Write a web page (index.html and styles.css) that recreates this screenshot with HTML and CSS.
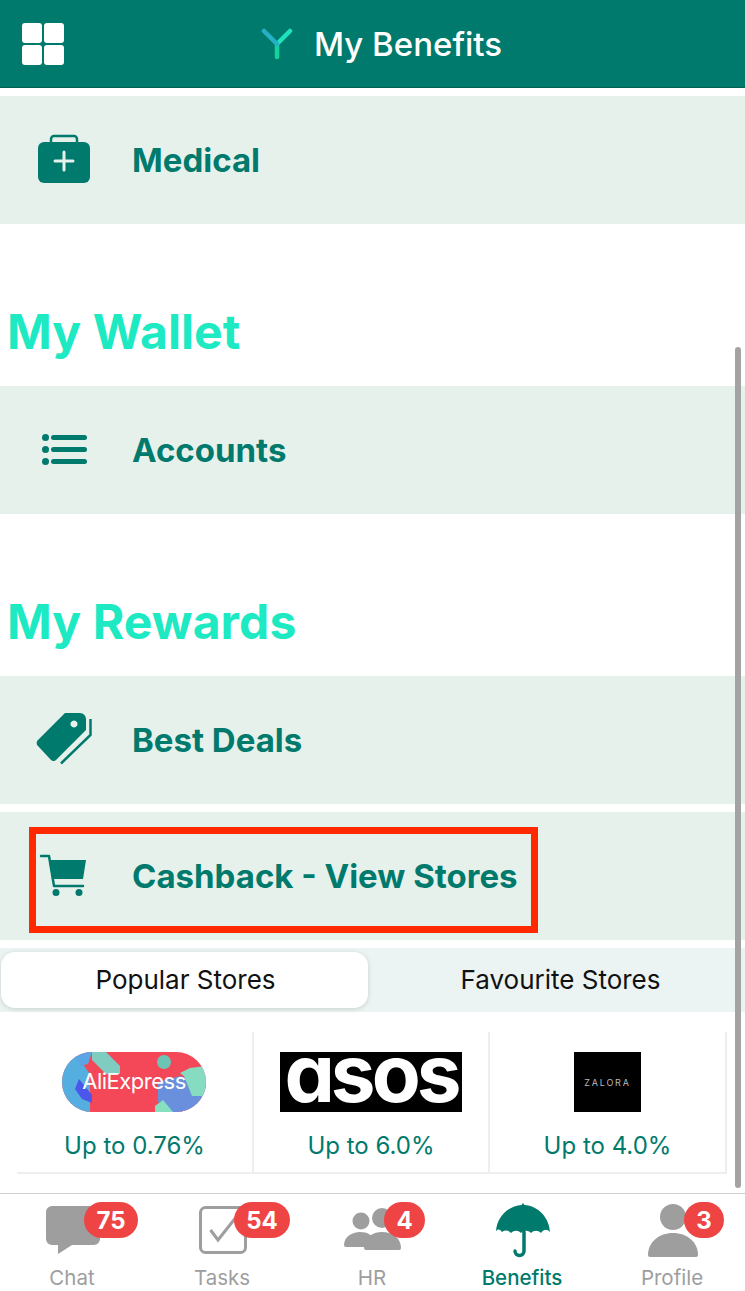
FILE: index.html
```html
<!DOCTYPE html>
<html lang="en">
<head>
  <meta charset="UTF-8">
  <meta name="viewport" content="width=device-width, initial-scale=1.0">
  <title>My Benefits</title>
  <link rel="stylesheet" href="styles.css">
</head>
<body>
  <header class="top-bar">
    <svg class="grid-icon" viewBox="0 0 44 44">
      <rect x="0" y="0" width="20" height="20" rx="3"/>
      <rect x="22" y="0" width="20" height="20" rx="3"/>
      <rect x="0" y="22" width="20" height="20" rx="3"/>
      <rect x="22" y="22" width="20" height="20" rx="3"/>
    </svg>
    <div class="title">
      <svg class="brand" viewBox="0 0 32 32">
        <path d="M16 17v12" stroke="#12d39b"/>
        <path d="M16 16L29 3" stroke="#1fe3bd"/>
        <path d="M16 16L3 3" stroke="#25b0c4"/>
      </svg>
      <h1>My Benefits</h1>
    </div>
  </header>

  <main class="content">
    <a class="row">
      <svg class="row-icon" viewBox="0 0 56 56">
        <path d="M15 11V7a3 3 0 0 1 3-3h20a3 3 0 0 1 3 3v4" fill="none" stroke="#007a6c" stroke-width="2.500"/>
        <rect x="2" y="10" width="52" height="41" rx="6" fill="#007a6c"/>
        <path d="M28 20v18M19 29h18" stroke="#e7f1ec" stroke-width="3" stroke-linecap="round"/>
      </svg>
      <span>Medical</span>
    </a>

    <h2>My Wallet</h2>
    <a class="row">
      <svg class="row-icon" viewBox="0 0 56 56">
        <g fill="#007a6c">
          <circle cx="9.500" cy="15.500" r="3.500"/><circle cx="9.500" cy="27.500" r="3.500"/><circle cx="9.500" cy="39.500" r="3.500"/>
          <rect x="15" y="13" width="36" height="5" rx="2.500"/><rect x="15" y="25" width="36" height="5" rx="2.500"/><rect x="15" y="37" width="36" height="5" rx="2.500"/>
        </g>
      </svg>
      <span>Accounts</span>
    </a>

    <h2>My Rewards</h2>
    <a class="row">
      <svg class="row-icon" viewBox="0 0 56 56">
        <path d="M29 1h15a6 6 0 0 1 6 6v11L21 47a4 4 0 0 1-6 1L2 34a4 4 0 0 1 0-6z M38 8.500a3.500 3.500 0 1 0 .01 0z" fill="#007a6c" fill-rule="evenodd"/>
        <path d="M54.500 7v16L25 51.500" fill="none" stroke="#007a6c" stroke-width="2.500"/>
      </svg>
      <span>Best Deals</span>
    </a>
    <a class="row row-cart">
      <svg class="row-icon" viewBox="0 0 56 56">
        <path d="M5 8h8l5 30h29" fill="none" stroke="#007a6c" stroke-width="2.500" stroke-linejoin="round" stroke-linecap="round"/>
        <path d="M13 12h37l-3 19H16z" fill="#007a6c"/>
        <circle cx="20" cy="44.500" r="3.500" fill="#007a6c"/>
        <circle cx="43" cy="44.500" r="3.500" fill="#007a6c"/>
      </svg>
      <span>Cashback - View Stores</span>
      <div class="highlight"></div>
    </a>

    <div class="tabs">
      <div class="tab active">Popular Stores</div>
      <div class="tab">Favourite Stores</div>
    </div>

    <div class="stores">
      <div class="store">
        <svg class="logo-ali" viewBox="0 0 144 60">
          <defs><clipPath id="pill"><rect width="144" height="60" rx="30"/></clipPath></defs>
          <g clip-path="url(#pill)">
            <rect width="144" height="60" fill="#f44758"/>
            <path d="M0 60V0h12l16 22v38z" fill="#55aee0"/>
            <path d="M10 0h20l-4 12-8 2z" fill="#5aa6e4"/>
            <path d="M30 0h14l14 14v8H44L30 8z" fill="#7ecdc0"/>
            <path d="M17 27l13 16v8l-10-4-7-10z" fill="#4a57ea"/>
            <path d="M96 30l22-6 26 8v28H110l-14-10z" fill="#6a8fdc"/>
            <path d="M118 21l10-5 16-2v30h-14l-8-20z" fill="#86dcc0"/>
            <path d="M93 60v-6l8-6 10 12z" fill="#86e0c0"/>
            <circle cx="102" cy="10" r="7" fill="#6bc4b4"/>
          </g>
          <text class="ali-text" x="72" y="37" text-anchor="middle">AliExpress</text>
        </svg>
        <p>Up to 0.76%</p>
      </div>
      <div class="store">
        <svg class="logo-asos" viewBox="0 0 182 60">
          <rect width="182" height="60" fill="#000"/>
          <text class="asos-text" x="91" y="50" text-anchor="middle">asos</text>
        </svg>
        <p>Up to 6.0%</p>
      </div>
      <div class="store">
        <div class="logo-zalora">ZALORA</div>
        <p>Up to 4.0%</p>
      </div>
    </div>
  </main>

  <div class="scrollbar"></div>

  <nav class="bottom-nav">
    <div class="nav-item">
      <svg class="nav-icon" viewBox="0 0 60 56">
        <path d="M10 4h42a6 6 0 0 1 6 6v27a6 6 0 0 1-6 6H30l-14 9v-9h-6a6 6 0 0 1-6-6V10a6 6 0 0 1 6-6z" fill="#9e9e9e"/>
      </svg>
      <span class="badge badge-chat">75</span>
      <span>Chat</span>
    </div>
    <div class="nav-item">
      <svg class="nav-icon" viewBox="0 0 60 56">
        <rect x="8.500" y="5.500" width="45" height="45" rx="5" fill="none" stroke="#9e9e9e" stroke-width="3"/>
        <path d="M18.500 28l7.500 10 19-24" fill="none" stroke="#9e9e9e" stroke-width="3"/>
      </svg>
      <span class="badge badge-tasks">54</span>
      <span>Tasks</span>
    </div>
    <div class="nav-item">
      <svg class="nav-icon" viewBox="0 0 60 56">
        <g fill="#9e9e9e" transform="translate(1 3)">
          <circle cx="18" cy="16" r="8.500"/>
          <path d="M1 40c0-8 8-13 16-13s11 3 13 6l-6 9H3a2 2 0 0 1-2-2z"/>
          <circle cx="39" cy="13" r="10"/>
          <path d="M21 43c0-10 8-16 18-16s19 6 19 16a2 2 0 0 1-2 2H23a2 2 0 0 1-2-2z"/>
        </g>
      </svg>
      <span class="badge badge-hr">4</span>
      <span>HR</span>
    </div>
    <div class="nav-item current">
      <svg class="nav-icon" viewBox="0 0 60 56">
        <path d="M31 1l1.500 2C46 4 57 15 58 30c-3-3-6-3-9 1-3-3-7-3-10 0-3-3-7-3-10 0-3-3-7-3-10 0-3-3-6-3-9-1-3-3-3-3-6-1C5 15 16 4 29.500 3z" fill="#007a6c"/>
        <path d="M32 30v19a4.500 4.500 0 0 1-9 0" fill="none" stroke="#007a6c" stroke-width="3.500" stroke-linecap="round"/>
      </svg>
      <span>Benefits</span>
    </div>
    <div class="nav-item">
      <svg class="nav-icon" viewBox="0 0 60 56">
        <circle cx="31" cy="15" r="13" fill="#9e9e9e"/>
        <path d="M6 53c0-13 11-22 25-22s25 9 25 22a2 2 0 0 1-2 2H8a2 2 0 0 1-2-2z" fill="#9e9e9e"/>
      </svg>
      <span class="badge badge-profile">3</span>
      <span>Profile</span>
    </div>
  </nav>
</body>
</html>
```

FILE: styles.css
```css
:root {
  --green: #007a6c;
  --row-bg: #e7f1ec;
  --mint: #1de9c3;
  --grey: #9e9e9e;
  --line: #eeeeee;
}

html, body {
  height: 100%;
}

body {
  margin: 0;
  position: relative;
  display: flex;
  flex-direction: column;
  overflow: hidden;
  background-color: #fff;
  font-family: Inter, "Noto Sans", sans-serif;
}

.top-bar {
  height: 87px;
  flex-shrink: 0;
  position: relative;
  display: flex;
  align-items: center;
  justify-content: center;
  background-color: var(--green);
  border-bottom: 1px solid #00614f;
}

.grid-icon {
  position: absolute;
  left: 22px;
  top: 23px;
  width: 44px;
  height: 44px;
  fill: #fff;
}

.title {
  display: flex;
  align-items: center;
  gap: 21px;
  margin-left: 18px;
}

.brand {
  width: 32px;
  height: 32px;
  fill: none;
  stroke-width: 4.500;
  stroke-linecap: round;
}

.title h1 {
  margin: 0;
  color: #fff;
  font-size: 33px;
  font-weight: 500;
  line-height: 40px;
}

.content {
  flex: 1;
  min-height: 0;
  padding-top: 8px;
}

.row {
  height: 128px;
  position: relative;
  display: flex;
  align-items: center;
  gap: 40px;
  padding-left: 36px;
  background-color: var(--row-bg);
  color: var(--green);
  font-size: 33px;
  font-weight: 700;
}

.row-icon {
  width: 56px;
  height: 56px;
  flex-shrink: 0;
}

.row + .row {
  margin-top: 8px;
}

.highlight {
  position: absolute;
  left: 29px;
  top: 15px;
  width: 509px;
  height: 106px;
  box-sizing: border-box;
  border: 7px solid #ff2a00;
}

h2 {
  margin: 0;
  height: 162px;
  box-sizing: border-box;
  padding: 78px 0 0 7px;
  color: var(--mint);
  font-size: 48px;
  font-weight: 700;
  line-height: 60px;
  letter-spacing: 0.1px;
}

.tabs {
  height: 64px;
  margin-top: 8px;
  padding: 4px 0 4px 1px;
  box-sizing: border-box;
  display: grid;
  grid-template-columns: 367px 1fr;
  background-color: #ebf4f2;
  font-size: 26px;
  color: #111;
}

.tab {
  display: flex;
  align-items: center;
  justify-content: center;
  padding: 0 0 2px 8px;
}

.tab.active {
  padding-left: 2px;
  background-color: #fff;
  border-radius: 14px;
  box-shadow: 0 1px 5px rgba(0, 0, 0, 0.15);
}

.stores {
  margin: 20px 0 0 17px;
  width: 710px;
  height: 142px;
  box-sizing: border-box;
  display: grid;
  grid-template-columns: 237px 236px 237px;
  border-bottom: 2px solid var(--line);
}

.store {
  display: flex;
  flex-direction: column;
  align-items: center;
  padding-top: 20px;
  border-right: 2px solid var(--line);
}

.store p {
  margin: 18px 0 0;
  color: var(--green);
  font-size: 24px;
  line-height: 32px;
}

.logo-ali {
  width: 144px;
  height: 60px;
  margin-right: 2px;
}

.ali-text {
  fill: #fff;
  font-size: 22px;
  letter-spacing: -0.5px;
}

.logo-asos {
  width: 182px;
  height: 60px;
}

.asos-text {
  fill: #fff;
  font-size: 80px;
  font-weight: 700;
  letter-spacing: -4px;
  font-feature-settings: "cv11";
}

.logo-zalora {
  width: 67px;
  height: 60px;
  display: flex;
  align-items: center;
  justify-content: center;
  background-color: #000;
  color: #bbb;
  font-size: 9px;
  letter-spacing: 1.800px;
}

.scrollbar {
  position: absolute;
  left: 735px;
  top: 347px;
  width: 6px;
  height: 841px;
  border-radius: 3px;
  background-color: #a3a3a3;
}

.bottom-nav {
  height: 97px;
  flex-shrink: 0;
  display: grid;
  grid-template-columns: repeat(5, 150px);
  justify-content: center;
  margin-left: -1px;
  border-top: 1px solid #d0d0d0;
  font-size: 20.500px;
  color: var(--grey);
}

.nav-item {
  position: relative;
  display: flex;
  flex-direction: column;
  align-items: center;
  padding-top: 8px;
}

.nav-item.current {
  color: var(--green);
  font-weight: 500;
}

.nav-icon {
  width: 60px;
  height: 56px;
  margin-bottom: 7px;
}

.badge {
  position: absolute;
  top: 8px;
  height: 36px;
  display: flex;
  align-items: center;
  justify-content: center;
  border-radius: 18px;
  background-color: #ef4444;
  color: #fff;
  font-size: 24px;
  font-weight: 700;
}

.badge-chat {
  left: 87px;
  width: 54px;
}

.badge-tasks {
  left: 87px;
  width: 56px;
}

.badge-hr {
  left: 87px;
  width: 41px;
}

.badge-profile {
  left: 87px;
  width: 40px;
}
```
